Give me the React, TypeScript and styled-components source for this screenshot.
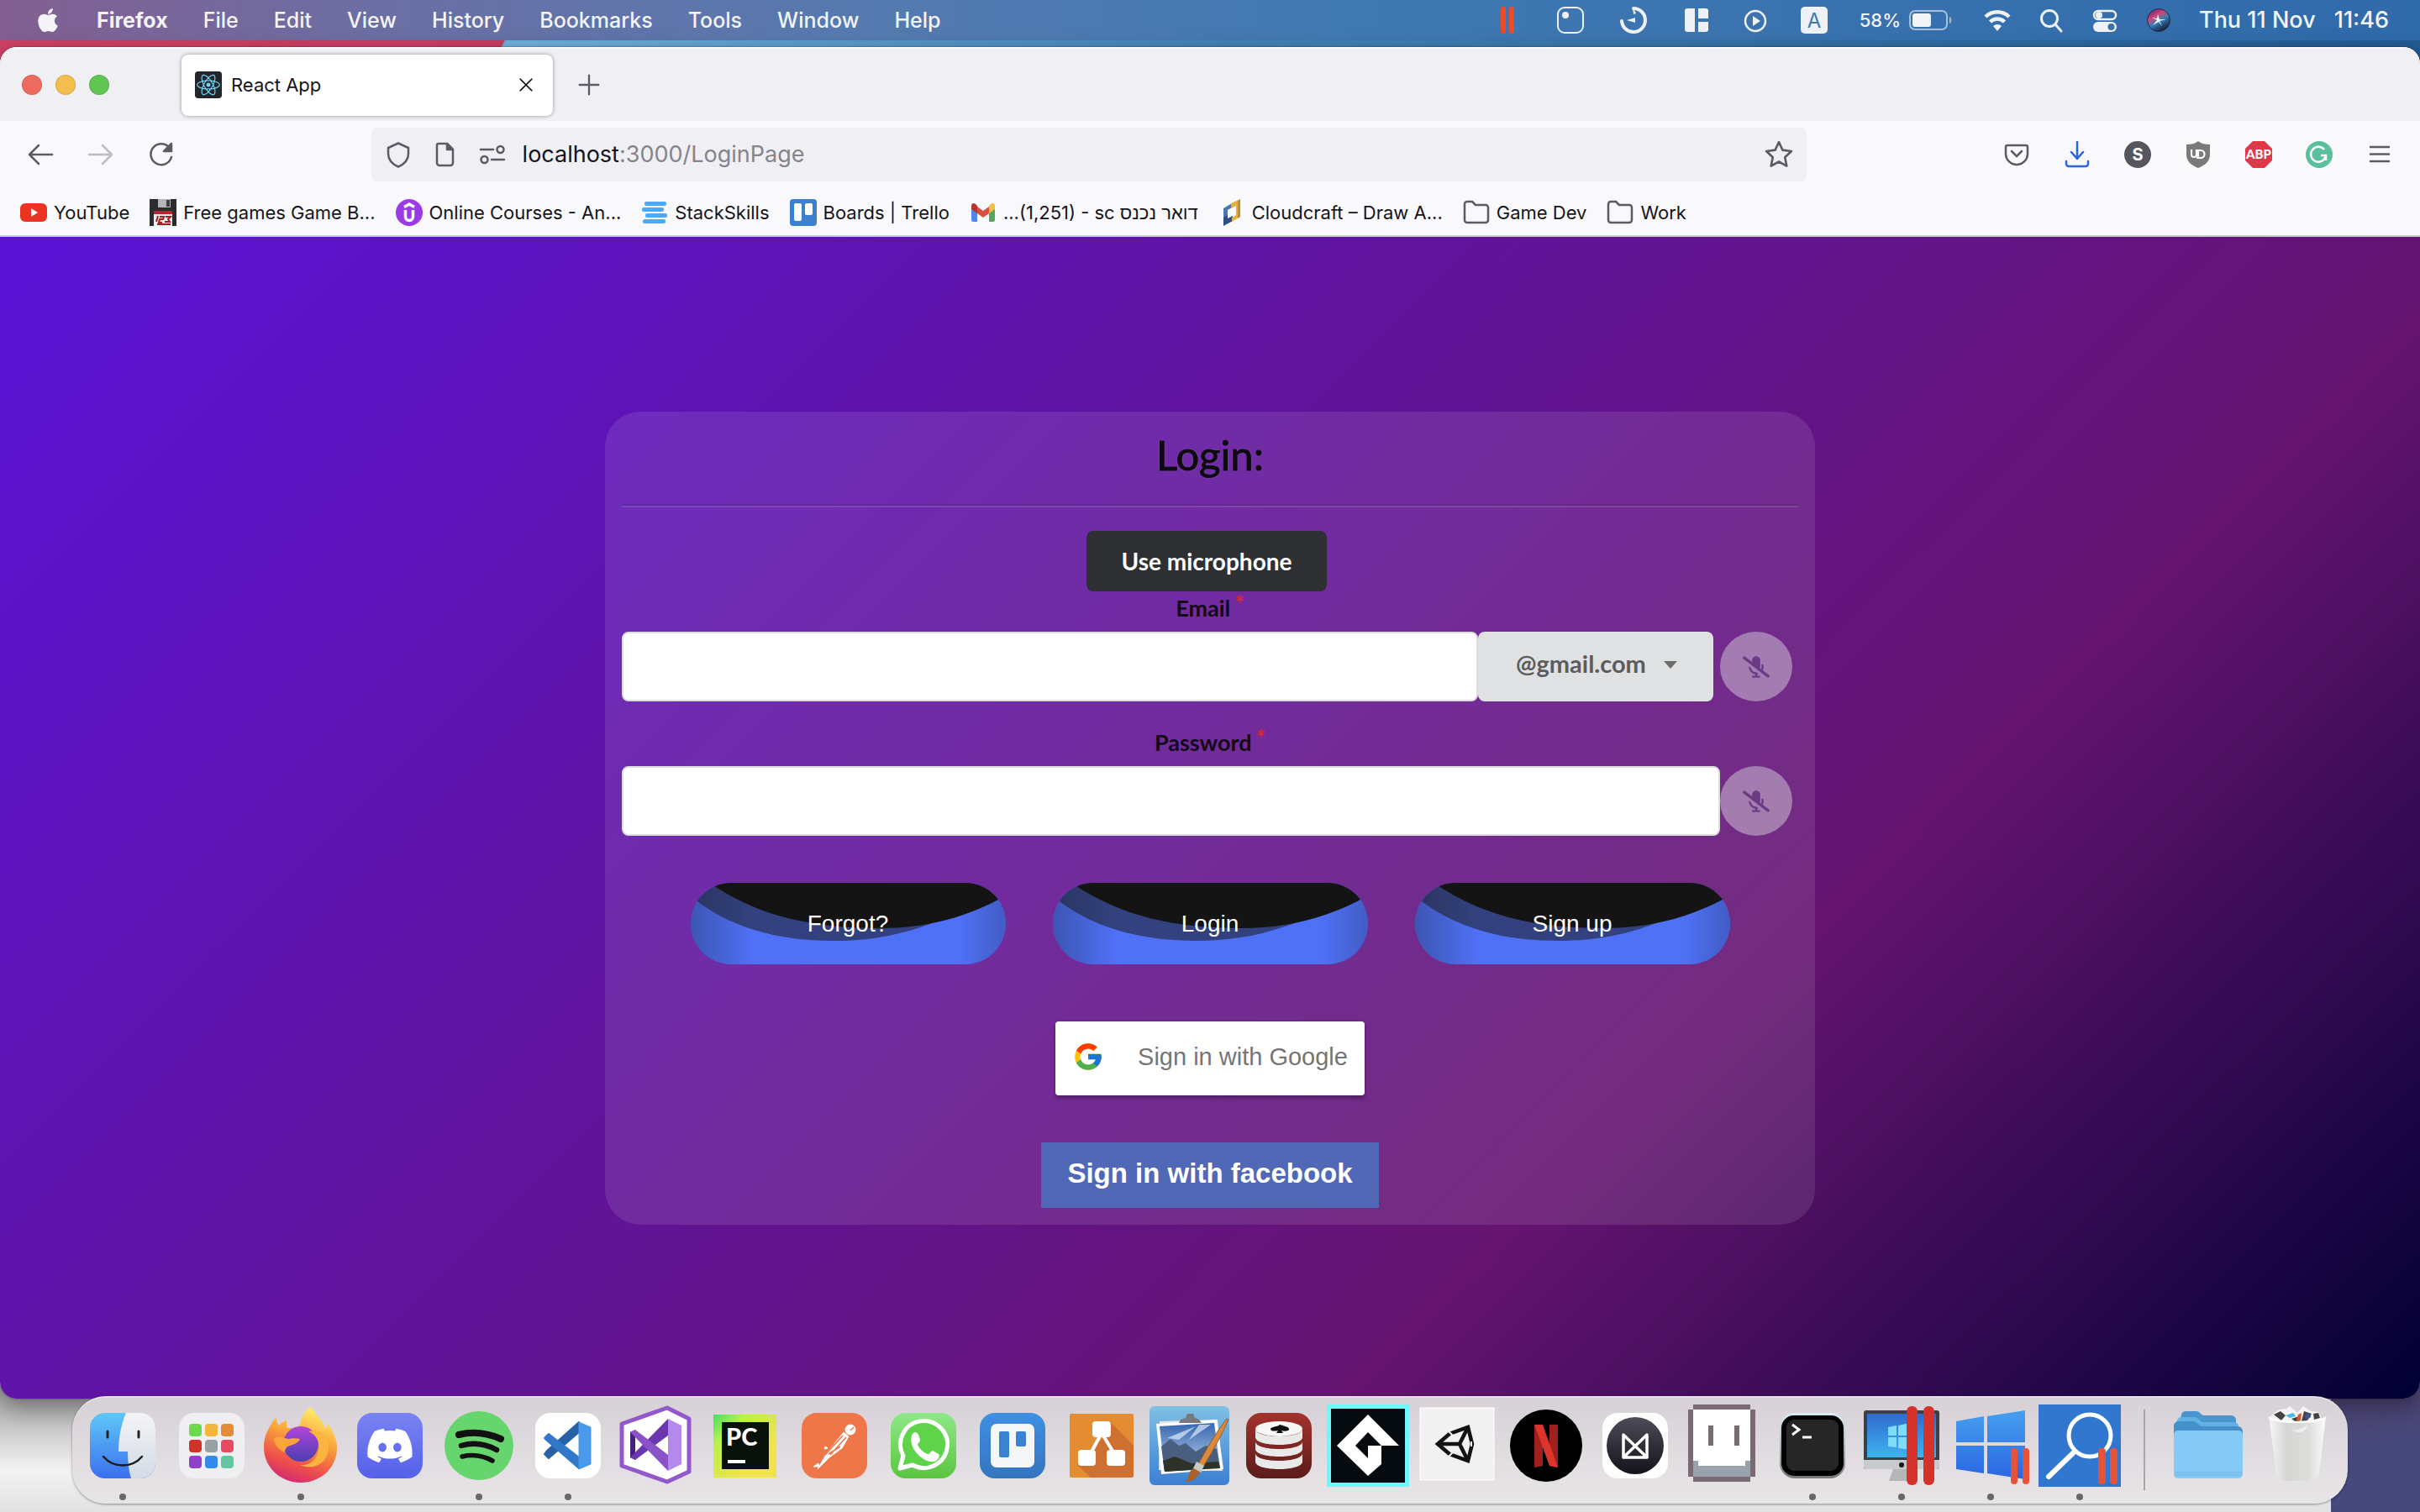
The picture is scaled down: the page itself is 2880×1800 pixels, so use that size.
import React from "react";
import styled, { createGlobalStyle } from "styled-components";
import { FaApple, FaDiscord, FaMicrophoneSlash, FaReact } from "react-icons/fa";
import { FcGoogle } from "react-icons/fc";

const GlobalStyle = createGlobalStyle`
  *, *::before, *::after { box-sizing: border-box; }
  html, body { margin: 0; padding: 0; }
  button, input, select { font: inherit; margin: 0; border: 0; padding: 0; background: none; color: inherit; }
  a { color: inherit; text-decoration: none; }
  svg { display: block; flex: none; }
`;

const uiFont = `Inter, "Liberation Sans", sans-serif`;
const pageFont = `Lato, "Liberation Sans", sans-serif`;
const plainFont = `"Liberation Sans", Arial, sans-serif`;

/* ---------- Desktop ---------- */

const Desktop = styled.div`
  position: relative;
  display: flex;
  flex-direction: column;
  min-height: 100vh;
  padding-bottom: 135px;
  overflow: hidden;
  font-family: ${uiFont};
  background:
    linear-gradient(116deg, #cf4263 0, #c83c63 560px, #6fb0da 562px, #4283b8 50%, #235a93 100%) top / 100% 90px no-repeat,
    linear-gradient(170deg, #5c2440 0%, #84375a 35%, #45497c 90%) bottom / 100% 260px no-repeat,
    #35568c;
`;

const BackWindow = styled.div`
  position: absolute;
  left: 0;
  right: 106px;
  bottom: 0;
  height: 180px;
  background: linear-gradient(to bottom, #8f8f8f 0, #a9a9a9 40px, #f2f2f2 130px, #e2e2e2 180px);
`;

const MenuBar = styled.header`
  display: flex;
  align-items: center;
  justify-content: space-between;
  height: 48px;
  padding: 0 37px 0 41px;
  color: #f3f3f8;
  font-size: 25px;
  line-height: 32px;
  background: linear-gradient(to right, #835f92 0, #6c6ea3 15%, #557ab0 36%, #4179b2 55%, #2f6aaa 100%);
`;

const MenuList = styled.nav`
  display: flex;
  align-items: center;
  gap: 42px;
  text-shadow: 0 2px 4px rgba(0, 0, 0, 0.3);
`;

const MenuItem = styled.button<{ $strong?: boolean }>`
  font-weight: ${(p) => (p.$strong ? 700 : 500)};
`;

const Status = styled.div<{ $gap: number }>`
  display: flex;
  align-items: center;
  gap: ${(p) => p.$gap}px;
`;

const Clock = styled.span`
  display: flex;
  justify-content: space-between;
  width: 226px;
  font-size: 27px;
  font-weight: 500;
  white-space: nowrap;
`;

const Percent = styled.span`
  font-size: 22px;
  font-weight: 500;
`;

/* ---------- Browser ---------- */

const BrowserWindow = styled.main`
  position: relative;
  display: flex;
  flex-direction: column;
  flex: 1;
  margin-top: 8px;
  border-radius: 20px;
  overflow: hidden;
  box-shadow: 0 0 2px rgba(0, 0, 0, 0.6), 0 12px 30px rgba(0, 0, 0, 0.35);
  background: #f9f9fb;
  color: #15141a;
`;

const TabStrip = styled.div`
  display: flex;
  align-items: center;
  height: 88px;
  padding: 0 26px;
  background: #f0eff4;
  border-top: 2px solid #fbfbfd;
`;

const Lights = styled.div`
  display: flex;
  gap: 16px;
  width: 190px;
`;

const Light = styled.button<{ $color: string }>`
  width: 24px;
  height: 24px;
  border-radius: 50%;
  background: ${(p) => p.$color};
  box-shadow: inset 0 0 0 1px rgba(0, 0, 0, 0.1);
`;

const Tab = styled.div`
  display: flex;
  align-items: center;
  width: 442px;
  height: 73px;
  padding: 0 24px 0 16px;
  border-radius: 8px;
  background: #fff;
  box-shadow: 0 0 4px rgba(0, 0, 0, 0.4);
  font-size: 22px;
  line-height: 32px;
`;

const TabTitle = styled.span`
  flex: 1;
  margin-left: 11px;
`;

const IconButton = styled.button<{ $size?: number }>`
  display: flex;
  align-items: center;
  justify-content: center;
  flex: none;
  width: ${(p) => p.$size ?? 72}px;
  height: ${(p) => p.$size ?? 72}px;
  color: #5b5b66;
`;

const NewTab = styled(IconButton)`
  margin-left: 7px;
`;

const Toolbar = styled.div`
  display: grid;
  grid-template-columns: 216px 1fr 8fr 1fr 504px;
  align-items: center;
  height: 80px;
  padding: 0 12px;
`;

const Cluster = styled.div<{ $column: number }>`
  grid-column: ${(p) => p.$column};
  display: flex;
`;

const UrlBar = styled.div`
  grid-column: 3;
  display: flex;
  align-items: center;
  height: 64px;
  padding: 0 16px;
  border-radius: 8px;
  background: #f0eff4;
  color: #5b5b66;
`;

const UrlIcons = styled.div`
  display: flex;
  gap: 24px;
  margin-right: 20px;
`;

const Address = styled.div`
  position: relative;
  flex: 1;
  font-size: 27px;
  line-height: 42px;
`;

const AddressInput = styled.input`
  width: 100%;
  color: transparent;
  caret-color: #15141a;
`;

const AddressText = styled.span`
  position: absolute;
  inset: 0;
  pointer-events: none;
  color: #85848a;
  b { font-weight: 400; color: #15141a; }
`;

const BookmarkBar = styled.nav`
  display: flex;
  align-items: center;
  gap: 24px;
  height: 58px;
  padding: 2px 24px 0;
  border-bottom: 2px solid #cccccf;
  font-size: 22px;
  line-height: 32px;
`;

const Bookmark = styled.a`
  display: flex;
  align-items: center;
  gap: 8px;
  white-space: nowrap;
`;

/* ---------- Login page ---------- */

const Page = styled.section`
  display: flex;
  flex: 1;
  align-items: flex-start;
  justify-content: center;
  padding-top: 208px;
  background: linear-gradient(135deg, #5a13d8 0%, #651470 70%, #000033 100%);
  font-family: ${pageFont};
`;

const Card = styled.form`
  display: flex;
  flex-direction: column;
  align-items: center;
  width: 50%;
  padding: 22px 20px 20px;
  border-radius: 42px;
  background: rgba(255, 255, 255, 0.1);
`;

const Title = styled.h1`
  margin: 0;
  font-size: 49px;
  font-weight: 400;
  line-height: 58px;
  color: #0e0a12;
  -webkit-text-stroke: 1px #0e0a12;
  text-shadow: 0 0 2px rgba(255, 255, 255, 0.35);
`;

const Divider = styled.hr`
  width: 100%;
  margin: 30px 0 28px;
  border: 0;
  border-top: 2px solid rgba(34, 36, 38, 0.15);
  border-bottom: 2px solid rgba(255, 255, 255, 0.12);
`;

const MicToggle = styled.button`
  height: 72px;
  margin-right: 8px;
  padding: 0 42px;
  border-radius: 8px;
  background: #2e3033;
  color: #fff;
  font-size: 28px;
  font-weight: 700;
`;

const FieldLabel = styled.label`
  margin: 4px 0 12px;
  font-size: 27px;
  font-weight: 700;
  line-height: 32px;
  color: #120a18;
`;

const Required = styled.span`
  margin-left: 5px;
  line-height: 20px;
  vertical-align: top;
  color: #db2828;
`;

const FieldRow = styled.div<{ $last?: boolean }>`
  display: flex;
  width: 100%;
  margin-bottom: ${(p) => (p.$last ? 56 : 29)}px;
  padding-right: 7px;
`;

const TextInput = styled.input`
  flex: 1;
  min-width: 0;
  height: 83px;
  padding: 0 28px;
  border: 2px solid #dedede;
  border-radius: 8px;
  background: #fff;
  font-size: 28px;
  color: #222;
`;

const DomainBox = styled.div`
  position: relative;
  width: 280px;
  margin-right: 8px;
`;

const DomainSelect = styled.select`
  appearance: none;
  width: 100%;
  height: 83px;
  padding: 0 0 9px 45px;
  border-radius: 8px;
  background: #e0e1e2;
  color: #5b5c5d;
  font-size: 29px;
  font-weight: 700;
`;

const Caret = styled.svg`
  position: absolute;
  top: 35px;
  right: 43px;
  pointer-events: none;
`;

const RoundMic = styled.button`
  display: flex;
  align-items: center;
  justify-content: center;
  width: 86px;
  height: 83px;
  border-radius: 50%;
  background: rgba(224, 225, 226, 0.45);
  color: #6b3a84;
`;

const Actions = styled.div`
  display: flex;
  gap: 56px;
`;

const WaveButton = styled.button`
  display: grid;
  width: 375px;
  height: 97px;
  border-radius: 48px;
  overflow: hidden;
  background: #4f71f6;
  color: #fff;
  font-family: ${plainFont};
  font-size: 28px;
  > * { grid-area: 1 / 1; }
`;

const WaveLabel = styled.span`
  position: relative;
  align-self: center;
`;

const GoogleButton = styled.button`
  display: flex;
  align-items: center;
  gap: 40px;
  height: 88px;
  margin-top: 68px;
  padding: 0 20px 4px;
  border-radius: 4px;
  background: #fff;
  color: #757575;
  box-shadow: 0 4px 4px rgba(0, 0, 0, 0.24), 0 0 2px rgba(0, 0, 0, 0.24);
  font-family: ${plainFont};
  font-size: 29px;
`;

const FacebookButton = styled.button`
  height: 78px;
  margin-top: 56px;
  padding: 0 31px 4px;
  background: #5068b5;
  color: #fff;
  font-family: ${plainFont};
  font-size: 33px;
  font-weight: 700;
`;

/* ---------- Dock ---------- */

const Dock = styled.nav`
  position: absolute;
  left: 3%;
  right: 3%;
  bottom: 10px;
  display: flex;
  align-items: flex-start;
  height: 128px;
  padding: 8px 7px 0;
  border-radius: 40px;
  border-top: 2px solid #e6e1e8;
  background: linear-gradient(to bottom, #d7d1d7, #e8e5e7);
  box-shadow: 0 1px 3px rgba(0, 0, 0, 0.4);
`;

const DockItem = styled.button`
  display: flex;
  flex: 1;
  flex-direction: column;
  align-items: center;
  gap: 8px;
`;

const RunningDot = styled.i`
  width: 8px;
  height: 8px;
  border-radius: 50%;
  background: #6a676a;
`;

const DockRule = styled.div`
  width: 2px;
  height: 96px;
  margin: 6px 22px 0 23px;
  background: #a9a6aa;
`;

/* ---------- Small icons ---------- */

type LineProps = { size?: number; width?: number; color?: string; children: React.ReactNode };

const Line = ({ size = 32, width = 2.5, color = "currentColor", children }: LineProps) => (
  <svg width={size} height={size} viewBox="0 0 32 32" fill="none" stroke={color} strokeWidth={width} strokeLinecap="round" strokeLinejoin="round">
    {children}
  </svg>
);

const Filled = ({ children }: { children: React.ReactNode }) => (
  <svg width="32" height="32" viewBox="0 0 32 32" fill="#eef1f6">
    {children}
  </svg>
);

const ParallelsBars = () => (
  <Filled>
    <rect x="8" y="0" width="6" height="32" rx="3" fill="#f04a26" />
    <rect x="18" y="0" width="6" height="32" rx="3" fill="#f04a26" />
  </Filled>
);

const BoxDot = () => (
  <Filled>
    <rect x="1" y="1" width="30" height="30" rx="8" fill="none" stroke="#eef1f6" strokeWidth="2" />
    <circle cx="10" cy="10" r="4" />
  </Filled>
);

const Swirl = () => (
  <Filled>
    <path d="M16 2a14 14 0 1 1-14 15" fill="none" stroke="#eef1f6" strokeWidth="4" strokeLinecap="round" />
    <path d="M15 0l4 8-3 1zM8 16l10-3v6z" />
  </Filled>
);

const Panels = () => (
  <Filled>
    <path d="M5 2h9v28H5a3 3 0 0 1-3-3V5a3 3 0 0 1 3-3zM18 2h9a3 3 0 0 1 3 3v9H18zM18 18h12v9a3 3 0 0 1-3 3h-9z" />
  </Filled>
);

const PlayRing = () => (
  <Filled>
    <circle cx="16" cy="17" r="12" fill="none" stroke="#eef1f6" strokeWidth="2.5" />
    <path d="M13 11l9 6-9 6z" />
  </Filled>
);

const InputSource = () => (
  <Filled>
    <rect width="32" height="32" rx="5" />
    <text x="16" y="25" textAnchor="middle" fontFamily="Inter" fontSize="24" fill="#3f77ad">A</text>
  </Filled>
);

const Battery = () => (
  <svg width="51" height="32" viewBox="0 0 51 32">
    <rect x="1" y="5" width="44" height="22" rx="6" fill="none" stroke="#a6c0db" strokeWidth="2" />
    <rect x="4" y="8" width="22" height="16" rx="3" fill="#f3f5f8" />
    <path d="M48 12c3 1 3 7 0 8z" fill="#a6c0db" />
  </svg>
);

const Wifi = () => (
  <Filled>
    <g fill="none" stroke="#eef1f6" strokeWidth="4.5">
      <path d="M2 12a20 20 0 0 1 28 0" />
      <path d="M7.500 18a12 12 0 0 1 17 0" />
    </g>
    <path d="M11 23a7 7 0 0 1 10 0l-5 6z" />
  </Filled>
);

const Search = () => (
  <Line width={3} color="#eef1f6">
    <circle cx="14" cy="14" r="9.500" />
    <path d="M21 21l7 8" />
  </Line>
);

const ControlCenter = () => (
  <Filled>
    <rect x="3" y="5" width="26" height="10" rx="5" fill="none" stroke="#eef1f6" strokeWidth="2.500" />
    <circle cx="9" cy="10" r="4" />
    <rect x="2" y="18" width="28" height="12" rx="6" />
    <circle cx="23.500" cy="24" r="4" fill="#3a72a9" />
  </Filled>
);

const Siri = () => (
  <Filled>
    <defs>
      <linearGradient id="siri" x1="0" y1="0" x2="0.600" y2="1">
        <stop offset="0" stopColor="#3a1e5c" />
        <stop offset="0.400" stopColor="#d2457e" />
        <stop offset="0.650" stopColor="#2f7fb4" />
        <stop offset="1" stopColor="#1c1c38" />
      </linearGradient>
    </defs>
    <circle cx="16" cy="16" r="13.500" fill="url(#siri)" stroke="#1d2c50" />
    <path d="M15 9l2 6 8 0-8 2 3 6-4-5-7 4 5-6-6-3 6 1z" fill="#dff8fb" />
  </Filled>
);

const Shield = () => (
  <Line>
    <path d="M16 2.500l12 5.500v7c0 7-5 12.500-12 15.500C9 27.500 4 22 4 15V8z" />
  </Line>
);

const Doc = () => (
  <Line>
    <path d="M8 3h10l7 7v16a3 3 0 0 1-3 3H9a3 3 0 0 1-3-3V5a2 2 0 0 1 2-2z" />
    <path d="M18 3v7h7z" fill="currentColor" />
  </Line>
);

const Permissions = () => (
  <Line>
    <path d="M2 10h15M15 22h15" />
    <circle cx="25.500" cy="10" r="4" />
    <circle cx="6.500" cy="22" r="4" />
  </Line>
);

const Star = () => (
  <Line size={34}>
    <path d="M16 2l4.200 9 9.800 1.200-7.200 6.800 1.900 9.800L16 24l-8.700 4.800 1.900-9.800L2 12.200 11.800 11z" />
  </Line>
);

const Floppy = () => (
  <svg width="32" height="32" viewBox="0 0 32 32">
    <path d="M0 0h32v32H0z" fill="#2c2b2d" />
    <path d="M10 0h15v10H10z" fill="#b4b4b6" />
    <path d="M20 1h4v8h-4z" fill="#3e3e40" />
    <path d="M5 14h22v18H5z" fill="#f0eeee" />
    <path d="M5 14h22v4H5z" fill="#b3282a" />
    <path d="M8 27l2-7M12 21h5l-1 3h-4l-1 4h4M19 21h6l-3 3 2 3h-6M9 30h16" fill="none" stroke="#a3201f" strokeWidth="2" />
  </svg>
);

const folderLine = <path d="M2 8V6a3 3 0 0 1 3-3h6l4 4h12a3 3 0 0 1 3 3v15a3 3 0 0 1-3 3H5a3 3 0 0 1-3-3z" />;

const bookmarks: { label: string; icon: React.ReactNode }[] = [
  {
    label: "YouTube",
    icon: (
      <svg width="32" height="32" viewBox="0 0 32 32">
        <rect y="5" width="32" height="22" rx="6" fill="#ea3323" />
        <path d="M13 11l8 5-8 5z" fill="#fff" />
      </svg>
    ),
  },
  { label: "Free games Game B...", icon: <Floppy /> },
  {
    label: "Online Courses - An...",
    icon: (
      <svg width="32" height="32" viewBox="0 0 32 32" fill="none" stroke="#fff" strokeWidth="3.500">
        <circle cx="16" cy="16" r="16" fill="#9b3be6" stroke="none" />
        <path d="M10 9.500L16 6l6 3.500M11.500 13v8a4.500 4.500 0 0 0 9 0v-8" />
      </svg>
    ),
  },
  {
    label: "StackSkills",
    icon: (
      <svg width="32" height="32" viewBox="0 0 32 32" fill="#4aaaf7">
        <rect x="4" y="3" width="26" height="5" rx="2" />
        <rect x="1" y="10" width="26" height="5" rx="2" />
        <rect x="5" y="17" width="26" height="5" rx="2" />
        <rect x="2" y="24" width="27" height="5" rx="2" />
      </svg>
    ),
  },
  {
    label: "Boards | Trello",
    icon: (
      <svg width="32" height="32" viewBox="0 0 32 32">
        <rect width="32" height="32" rx="4" fill="#3a80cf" />
        <rect x="5" y="5" width="9" height="21" rx="2" fill="#fff" />
        <rect x="18" y="5" width="9" height="14" rx="2" fill="#fff" />
      </svg>
    ),
  },
  {
    label: "...(1,251) - sc דואר נכנס",
    icon: (
      <svg width="32" height="32" viewBox="0 0 32 32">
        <path d="M2 9l7 6v12H4a2 2 0 0 1-2-2z" fill="#5086ec" />
        <path d="M30 9l-7 6v12h5a2 2 0 0 0 2-2z" fill="#58a65c" />
        <path d="M9 9l7 5 7-5v8l-7 5-7-5z" fill="#d85140" />
        <path d="M2 12V8c0-3 3-4 5-2l2 2v9z" fill="#b5372c" />
        <path d="M30 12V8c0-3-3-4-5-2l-2 2v9z" fill="#f1bf42" />
      </svg>
    ),
  },
  {
    label: "Cloudcraft – Draw A...",
    icon: (
      <svg width="32" height="32" viewBox="0 0 32 32">
        <path d="M6 11l10-6v5l-5 3v10l-5 4z" fill="#4a78ae" />
        <path d="M6 22l5-3v4l6-3v6L6 32z" fill="#2d4f80" />
        <path d="M15 5l11-5v21l-10 6v-5l5-3V8l-6 3z" fill="#e5b142" />
        <path d="M23 2l3-2v21l-3 2z" fill="#c08f2d" />
      </svg>
    ),
  },
  { label: "Game Dev", icon: <Line color="#5b5b66">{folderLine}</Line> },
  { label: "Work", icon: <Line color="#5b5b66">{folderLine}</Line> },
];

/* ---------- Dock icons, drawn on a 98 × 98 grid ---------- */

const Tile = ({ fill }: { fill: string }) => <rect x="10" y="10" width="78" height="78" rx="18" fill={fill} />;

const Fade = ({ id, from, to }: { id: string; from: string; to: string }) => (
  <linearGradient id={id} x1="0" y1="0" x2="0" y2="1">
    <stop offset="0" stopColor={from} />
    <stop offset="1" stopColor={to} />
  </linearGradient>
);

const launchColors = ["#6cd94c", "#f3b73c", "#e58a35", "#cf3326", "#97a0a2", "#e84a61", "#8f42c8", "#3489ec", "#62c6a0"];

const dockIcons: { name: string; running?: boolean; art: React.ReactNode }[] = [
  {
    name: "Finder",
    running: true,
    art: (
      <>
        <defs>
          <Fade id="finder" from="#5fc8f8" to="#3b6fee" />
          <Fade id="finderFace" from="#f4f4f6" to="#d3dbe6" />
          <clipPath id="finderClip"><rect x="10" y="10" width="78" height="78" rx="18" /></clipPath>
        </defs>
        <Tile fill="url(#finder)" />
        <path d="M53 10c-6 14-9 30-9 46h11c0 12 1 22 4 32h30V10z" fill="url(#finderFace)" clipPath="url(#finderClip)" />
        <path d="M31 32v7M68 32v7" stroke="#222" strokeWidth="3" strokeLinecap="round" />
        <path d="M26 62c12 14 34 14 46 0" fill="none" stroke="#1c1c1c" strokeWidth="2.500" strokeLinecap="round" />
      </>
    ),
  },
  {
    name: "Launchpad",
    art: (
      <>
        <Tile fill="#efeff1" />
        {launchColors.map((color, i) => (
          <rect key={color} x={22 + (i % 3) * 19} y={23 + Math.floor(i / 3) * 19} width="15" height="15" rx="4" fill={color} />
        ))}
      </>
    ),
  },
  {
    name: "Firefox",
    running: true,
    art: (
      <>
        <defs>
          <linearGradient id="fox" x1="0.700" y1="0" x2="0.350" y2="1">
            <stop offset="0" stopColor="#fff36a" />
            <stop offset="0.400" stopColor="#f9a53a" />
            <stop offset="0.750" stopColor="#ee5148" />
            <stop offset="1" stopColor="#d42a74" />
          </linearGradient>
          <Fade id="globe" from="#b344dc" to="#4a3fb0" />
        </defs>
        <path d="M61 3c5 9 13 14 17 26 2-2 2-4 2-7 8 9 12 20 12 30 0 23-19 41-43 41S5 75 5 51c0-12 4-20 9-28 1-3 3-5 6-7 0 4 1 7 3 9 2-3 6-5 9-6v8c3 1 5 2 8 1 5-1 9-3 9-8 2-8 6-13 12-17z" fill="url(#fox)" />
        <circle cx="49" cy="47" r="21" fill="url(#globe)" />
        <path d="M17 40c8-3 13 0 17 1 5-1 9-1 14 0-2 5-8 7-12 8-4 1-6 4-6 8-7-3-13-9-13-17z" fill="#f8a63c" />
        <path d="M58 32c12 5 16 18 10 29-4 8-12 12-20 11 20 8 36-6 34-24-1-13-10-18-24-16z" fill="#fbb53f" />
      </>
    ),
  },
  {
    name: "Discord",
    art: (
      <>
        <defs><Fade id="discord" from="#7a83f1" to="#5460ea" /></defs>
        <Tile fill="url(#discord)" />
        <FaDiscord x={20} y={20} size={58} color="#fff" />
      </>
    ),
  },
  {
    name: "Spotify",
    running: true,
    art: (
      <>
        <circle cx="49" cy="49" r="41" fill="#66d56e" />
        <g fill="none" stroke="#111" strokeLinecap="round">
          <path d="M25 36c16-4 34-2 50 5" strokeWidth="8" />
          <path d="M28 49c14-4 29-2 42 5" strokeWidth="6.500" />
          <path d="M29 62c13-3 25-1 36 5" strokeWidth="5.500" />
        </g>
      </>
    ),
  },
  {
    name: "Visual Studio Code",
    running: true,
    art: (
      <>
        <Tile fill="#fff" />
        <path d="M21 59l5 5 36-31V21L24 55z" fill="#2862a6" stroke="#2862a6" strokeWidth="2" strokeLinejoin="round" />
        <path d="M21 40l5-5 36 28v13L24 43z" fill="#3278c8" stroke="#3278c8" strokeWidth="2" strokeLinejoin="round" />
        <path d="M62 21l14 6v44l-14 6z" fill="#4a9aec" stroke="#4a9aec" strokeLinejoin="round" />
      </>
    ),
  },
  {
    name: "Visual Studio",
    art: (
      <>
        <path d="M62 4l26 13v63L62 92 8 73V23z" fill="#fff" stroke="#9359cc" strokeWidth="5" strokeLinejoin="round" />
        <path d="M18 33l6-3v36l-6-3z" fill="#472080" />
        <path d="M24 66l39-29V17L18 63z" fill="#6a37b0" />
        <path d="M24 30l39 30v19L18 33z" fill="#8a52c8" />
        <path d="M63 17l16 8v46l-16 8z" fill="#b38aec" />
      </>
    ),
  },
  {
    name: "PyCharm",
    art: (
      <>
        <defs>
          <linearGradient id="pycharm" x1="0" y1="0" x2="0.700" y2="0.700">
            <stop offset="0" stopColor="#3fe35d" />
            <stop offset="0.350" stopColor="#b6f04e" />
            <stop offset="1" stopColor="#f2e34c" />
          </linearGradient>
        </defs>
        <rect x="11" y="12" width="75" height="75" fill="url(#pycharm)" />
        <rect x="21" y="21" width="56" height="56" fill="#08110a" />
        <text x="26" y="49" fontFamily="Lato" fontWeight="900" fontSize="29" fill="#fff">PC</text>
        <rect x="28" y="66" width="21" height="4" fill="#fff" />
      </>
    ),
  },
  {
    name: "Postman",
    art: (
      <>
        <Tile fill="#ee7649" />
        <g fill="#fff" stroke="#fff" strokeLinejoin="round">
          <circle cx="68" cy="30" r="6" />
          <path d="M60 33l6 5-8 14-15 11-14 14 11-19z" />
          <path d="M38 50l-1 3 4-1zM24 74l6-4 1 4z" />
        </g>
        <path d="M59 37L38 60M63 39L44 60M68 31l4-4M42 59l14-9" stroke="#ee7649" strokeWidth="1.500" />
      </>
    ),
  },
  {
    name: "WhatsApp",
    art: (
      <>
        <defs><Fade id="whatsapp" from="#8ee887" to="#5ac540" /></defs>
        <Tile fill="url(#whatsapp)" />
        <path d="M21 76l4-15a28 28 0 1 1 11 11z" fill="#5fd34a" stroke="#fff" strokeWidth="5" strokeLinejoin="round" />
        <path d="M35 37c2-5 6-5 8-1l2 6c0 3-3 4-3 6 3 6 7 9 12 11 3 0 4-4 6-4l7 4c2 2 0 6-3 8-5 3-13 0-19-5-7-6-13-15-10-25z" fill="#fff" />
      </>
    ),
  },
  {
    name: "Trello",
    art: (
      <>
        <defs><Fade id="trello" from="#3f8fe4" to="#3475bf" /></defs>
        <Tile fill="url(#trello)" />
        <rect x="23" y="23" width="52" height="52" rx="7" fill="#f5f6f8" />
        <rect x="33" y="32" width="12" height="31" rx="2" fill="#3a82d2" />
        <rect x="53" y="32" width="12" height="18" rx="2" fill="#3a82d2" />
      </>
    ),
  },
  {
    name: "draw.io",
    art: (
      <>
        <rect x="11" y="11" width="76" height="76" rx="2" fill="#e38c31" />
        <path d="M59 20l28 29v36l-2 2H36L20 72l31-33z" fill="#d07030" />
        <path d="M49 34L35 60M49 34l16 26" stroke="#fff" strokeWidth="4" />
        <g fill="#fff">
          <rect x="38" y="20" width="22" height="19" rx="4" />
          <rect x="21" y="54" width="21" height="19" rx="4" />
          <rect x="55" y="54" width="22" height="19" rx="4" />
        </g>
      </>
    ),
  },
  {
    name: "Paintbrush",
    art: (
      <>
        <defs>
          <Fade id="paint" from="#7fc0e4" to="#3d7fd2" />
          <Fade id="sky" from="#3566b0" to="#c4d8ee" />
        </defs>
        <rect x="1" y="2" width="95" height="94" rx="6" fill="url(#paint)" />
        <path d="M13 20l69-2 6 61-76-1z" fill="#e8e4df" />
        <path d="M9 23l72-5 8 59-74 6z" fill="#fbfbfb" />
        <path d="M13 26l65-4 7 53-66 5z" fill="url(#sky)" />
        <path d="M22 40l34-14-20 16zM60 24l14 0-26 18z" fill="#dbe8f6" opacity="0.700" />
        <path d="M15 50l11-9 10 8 8-3 12 10 12-7 13 4 4 22-66 5z" fill="#4a5f80" />
        <path d="M17 67l14-5 20 8 32-2 2 8-66 4z" fill="#2e3329" />
        <path d="M38 18l-2 4h27l-3-4-5-2-2-5h-7l-2 5z" fill="#77797c" />
        <path d="M93 17c-12 15-24 36-34 54l6 3c11-18 22-38 30-56z" fill="#d98a3d" stroke="#9a5c20" />
        <path d="M57 68l9 5-4 8-9-5z" fill="#c9c9c9" />
        <path d="M53 76l8 4c-3 8-9 12-17 12 4-5 3-12 9-16z" fill="#a9602a" />
      </>
    ),
  },
  {
    name: "Sequel Ace",
    art: (
      <>
        <defs><Fade id="sequel" from="#a4322c" to="#5a1c1a" /></defs>
        <Tile fill="url(#sequel)" />
        <g fill="#e9e9e9">
          <path d="M21 58c0 12 56 12 56 0v10c0 12-56 12-56 0z" />
          <path d="M21 44c0 12 56 12 56 0v9c0 12-56 12-56 0z" />
          <path d="M21 29c0 12 56 12 56 0v10c0 12-56 12-56 0z" />
        </g>
        <ellipse cx="49" cy="29" rx="28" ry="9" fill="#f7f7f7" />
        <path d="M50 24c6 2 12 3 11 6-1 2-6 2-9 1l2 3h-8l2-3c-4 1-9 1-9-2 1-3 8-2 11-5z" fill="#111" />
      </>
    ),
  },
  {
    name: "GameMaker",
    art: (
      <>
        <rect width="98" height="98" fill="#6ff7fb" />
        <rect x="5" y="5" width="88" height="88" fill="#060b10" />
        <path d="M49 12l37 37H65v22L49 85 12 49zM49 33L34 49l15 15V49h16z" fill="#fff" fillRule="evenodd" />
      </>
    ),
  },
  {
    name: "Unity",
    art: (
      <>
        <rect x="5" y="4" width="88" height="86" fill="#f1f1f1" stroke="#fff" />
        <path d="M26 47l14-12 22-8 5 20-5 20-22-8zM26 47h26M52 47l10-20M52 47l10 20" fill="none" stroke="#121212" strokeWidth="4.500" />
        <path d="M38 31l6 6M38 63l6-6M66 44v6" stroke="#f1f1f1" strokeWidth="2" />
      </>
    ),
  },
  {
    name: "Netflix",
    art: (
      <>
        <circle cx="49" cy="49" r="43" fill="#000" />
        <path d="M35 24h10v49l-10 2zM53 24h10v51l-10-2z" fill="#9f201c" />
        <path d="M35 24h10l18 51-10-2z" fill="#dc352d" />
      </>
    ),
  },
  {
    name: "Xmind",
    art: (
      <>
        <defs><Fade id="mind" from="#4c4b58" to="#14131a" /></defs>
        <Tile fill="#fdfdfd" />
        <circle cx="49" cy="49" r="34" fill="url(#mind)" />
        <path d="M35 63V36l28 27V36L35 63zM35 63h28" fill="none" stroke="#fff" strokeWidth="3.500" strokeLinejoin="round" />
      </>
    ),
  },
  {
    name: "Aseprite",
    art: (
      <>
        <path d="M12 0h68v6h6v80h-6v6H12v-6H6V6h6z" fill="#7a6a73" />
        <path d="M12 6h68v70H12z" fill="#fff" />
        <path d="M12 67h6v6h56v-6h6v19H12z" fill="#98a3ae" />
        <path d="M30 25h6v24h-6zM61 25h6v24h-6z" fill="#7a6a73" />
      </>
    ),
  },
  {
    name: "Terminal",
    running: true,
    art: (
      <>
        <defs><Fade id="terminal" from="#d9ecf6" to="#77797b" /></defs>
        <Tile fill="url(#terminal)" />
        <rect x="12" y="13" width="74" height="72" rx="15" fill="#000" />
        <rect x="18" y="18" width="62" height="61" rx="9" fill="#262626" />
        <path d="M25 24l8 6-8 6M37 39h11" fill="none" stroke="#fff" strokeWidth="3" />
      </>
    ),
  },
  {
    name: "Parallels Desktop",
    running: true,
    art: (
      <>
        <defs><Fade id="screen" from="#2f6ad0" to="#3fb4ee" /></defs>
        <rect x="4" y="7" width="90" height="70" rx="3" fill="#3d3f43" />
        <rect x="8" y="11" width="82" height="52" fill="url(#screen)" />
        <path d="M4 66h90v8a3 3 0 0 1-3 3H7a3 3 0 0 1-3-3z" fill="#c9cacc" />
        <circle cx="49" cy="72" r="3" fill="#111" />
        <path d="M39 77h21l4 14H34z" fill="#b5b6b8" />
        <path d="M33 27l10-2v12H33zM45 25l14-3v15H45zM33 39h10v12l-10-1zM45 39h14v15l-14-2z" fill="#7fdcf8" />
        <rect x="55" y="2" width="13" height="94" rx="6" fill="#d5322b" />
        <rect x="75" y="2" width="13" height="94" rx="6" fill="#d5322b" />
      </>
    ),
  },
  {
    name: "Windows",
    running: true,
    art: (
      <>
        <defs><Fade id="panes" from="#469fee" to="#2b66e4" /></defs>
        <path d="M8 20l33-6v31H8zM45 14l45-7v38H45zM8 49h33v33L8 77zM45 49h45v40l-45-7z" fill="url(#panes)" />
        <rect x="73" y="52" width="8" height="43" rx="4" fill="#e5533b" />
        <rect x="87" y="52" width="8" height="43" rx="4" fill="#e5533b" />
      </>
    ),
  },
  {
    name: "Search",
    running: true,
    art: (
      <>
        <rect width="98" height="98" fill="#3277cf" />
        <circle cx="61" cy="37" r="25" fill="none" stroke="#fff" strokeWidth="5" />
        <path d="M43 56L12 86" stroke="#fff" strokeWidth="6" strokeLinecap="round" />
        <rect x="71" y="52" width="9" height="43" rx="4" fill="#e5533b" />
        <rect x="85" y="52" width="9" height="43" rx="4" fill="#e5533b" />
      </>
    ),
  },
];

const tray: { name: string; art: React.ReactNode }[] = [
  {
    name: "Downloads",
    art: (
      <>
        <path d="M17 12c1-3 3-4 5-4h13c4 0 5 5 9 5h32c4 0 6 3 6 6v10H14z" fill="#4a95cd" />
        <path d="M12 19c1-3 3-4 5-4h16c5 0 5 6 10 6h36c3 0 6 2 6 5v12H8V24z" fill="#62b1e4" />
        <path d="M8 27c0-5 3-7 7-7h15c6 0 7 6 12 6h42c4 0 6 3 6 7v12H8z" fill="#4490ca" />
        <rect x="8" y="31" width="82" height="57" rx="5" fill="#86cbf6" />
        <path d="M9 81h80M9 84h80" stroke="#6db4e4" />
      </>
    ),
  },
  {
    name: "Trash",
    art: (
      <>
        <defs>
          <linearGradient id="bin" x1="0" x2="1">
            <stop offset="0" stopColor="#f7f7f7" />
            <stop offset="0.300" stopColor="#d6d6d5" />
            <stop offset="0.700" stopColor="#dddddc" />
            <stop offset="1" stopColor="#fafafa" />
          </linearGradient>
        </defs>
        <path d="M17 14l10-8 9-1 4-3 9 8 7-8 9 6 9 1 5 11-31 6-30-7z" fill="#f4f4f4" />
        <path d="M21 12l8-4 6 5-5 6zM42 17l9-3-2 8zM57 8l9 3-5 8-7 1zM68 11l6-1 2 6-7 2z" fill="#46423f" />
        <path d="M35 13l9-3 3 4-7 2z" fill="#45b8e6" />
        <path d="M50 12l4-2-1 9-6 3z" fill="#d9582e" />
        <path d="M58 12l6-2 1 5-6 4z" fill="#42518f" />
        <path d="M15 14c8 9 60 9 68 0l-8 68c-1 5-6 8-12 9H36c-6-1-11-4-12-9z" fill="url(#bin)" />
        <path d="M15 15c8 8 60 8 68 0" fill="none" stroke="#fff" strokeWidth="2" />
        <path d="M41 30c8 2 16-2 20-6-1 8-8 12-20 6z" fill="#efefef" />
      </>
    ),
  },
];

const Glyph = ({ children }: { children: React.ReactNode }) => (
  <svg width="98" height="98" viewBox="0 0 98 98">
    {children}
  </svg>
);

const menus = ["Firefox", "File", "Edit", "View", "History", "Bookmarks", "Tools", "Window", "Help"];

const Wave = () => (
  <svg width="375" height="97" viewBox="0 0 375 97" aria-hidden="true">
    <defs>
      <linearGradient id="edge">
        <stop offset="0" stopColor="#141414" stopOpacity="0.300" />
        <stop offset="0.200" stopColor="#141414" stopOpacity="0" />
        <stop offset="0.850" stopColor="#141414" stopOpacity="0" />
        <stop offset="1" stopColor="#141414" stopOpacity="0.220" />
      </linearGradient>
    </defs>
    <path d="M0 16c44 36 100 53 170 53 48 0 86-8 130-26L375 0H0z" fill="#33427f" />
    <path d="M14 -6c62 46 130 60 211 60 55 0 105-13 150-39V-6z" fill="#141414" />
    <path d="M0 0h26c62 40 124 54 199 54 55 0 105-13 150-39v82H0z" fill="url(#edge)" />
  </svg>
);

const ToolbarIcons = () => (
  <Cluster $column={5}>
    <IconButton type="button" aria-label="Pocket">
      <Line><path d="M5 5h22a2 2 0 0 1 2 2v8a13 13 0 0 1-26 0V7a2 2 0 0 1 2-2zM10 12l6 6 6-6" /></Line>
    </IconButton>
    <IconButton type="button" aria-label="Downloads">
      <Line color="#2a63dc"><path d="M16 1v19M9 13l7 8 7-8M3 24v3a3 3 0 0 0 3 3h20a3 3 0 0 0 3-3v-3" /></Line>
    </IconButton>
    <IconButton type="button" aria-label="Stylus">
      <svg width="32" height="32" viewBox="0 0 32 32">
        <circle cx="16" cy="16" r="16" fill="#56565f" />
        <text x="16" y="23" textAnchor="middle" fontFamily="Inter" fontWeight="700" fontSize="20" fill="#fff">S</text>
      </svg>
    </IconButton>
    <IconButton type="button" aria-label="uBlock">
      <svg width="32" height="32" viewBox="0 0 32 32">
        <path d="M16 0c4 3 8 4 14 4v12c0 8-6 13-14 16C8 29 2 24 2 16V4c6 0 10-1 14-4z" fill="#7a7a7a" />
        <path d="M8 10v6a3 3 0 0 0 6 0v-6M16 20v-9h3a4.500 4.500 0 0 1 0 9h-5" fill="none" stroke="#fff" strokeWidth="2.200" />
      </svg>
    </IconButton>
    <IconButton type="button" aria-label="Adblock Plus">
      <svg width="32" height="32" viewBox="0 0 32 32">
        <path d="M9 0h14l9 9v14l-9 9H9l-9-9V9z" fill="#dc3a48" />
        <text x="16" y="21" textAnchor="middle" fontFamily="Lato" fontWeight="900" fontSize="15" fill="#fff">ABP</text>
      </svg>
    </IconButton>
    <IconButton type="button" aria-label="Grammarly">
      <svg width="32" height="32" viewBox="0 0 32 32">
        <circle cx="16" cy="16" r="16" fill="#5ac09c" />
        <path d="M22 10a9 9 0 1 0 2 7h-6M24 17v6" fill="none" stroke="#fff" strokeWidth="2.500" />
      </svg>
    </IconButton>
    <IconButton type="button" aria-label="Menu">
      <Line><path d="M5 7h22M5 15.500h22M5 24h22" /></Line>
    </IconButton>
  </Cluster>
);

export default function App() {
  return (
    <Desktop>
      <GlobalStyle />
      <BackWindow />
      <MenuBar>
        <MenuList>
          <FaApple size={32} />
          {menus.map((name, i) => (
            <MenuItem key={name} type="button" $strong={i === 0}>{name}</MenuItem>
          ))}
        </MenuList>
        <Status $gap={38}>
          <Status $gap={43}>
            <ParallelsBars />
            <BoxDot />
            <Swirl />
            <Panels />
          </Status>
          <PlayRing />
          <InputSource />
          <Status $gap={10}>
            <Percent>58%</Percent>
            <Battery />
          </Status>
          <Status $gap={32}>
            <Wifi />
            <Search />
            <ControlCenter />
            <Siri />
            <Clock>
              <span>Thu 11 Nov</span>
              <span>11:46</span>
            </Clock>
          </Status>
        </Status>
      </MenuBar>

      <BrowserWindow>
        <TabStrip>
          <Lights>
            <Light type="button" aria-label="Close" $color="#ed6a5e" />
            <Light type="button" aria-label="Minimise" $color="#f4be4f" />
            <Light type="button" aria-label="Zoom" $color="#61c554" />
          </Lights>
          <Tab>
            <svg width="32" height="32" viewBox="0 0 32 32">
              <rect width="32" height="32" rx="4" fill="#222529" />
              <FaReact x={2} y={2} size={28} color="#6fd6f5" />
            </svg>
            <TabTitle>React App</TabTitle>
            <IconButton type="button" aria-label="Close tab" $size={16}>
              <Line size={20} color="#15141a"><path d="M5 5l22 22M27 5L5 27" /></Line>
            </IconButton>
          </Tab>
          <NewTab type="button" aria-label="New tab">
            <Line size={30}><path d="M16 4v24M4 16h24" /></Line>
          </NewTab>
        </TabStrip>

        <Toolbar>
          <Cluster $column={1}>
            <IconButton type="button" aria-label="Back">
              <Line><path d="M30 16H3M14 5L3 16l11 11" /></Line>
            </IconButton>
            <IconButton type="button" aria-label="Forward" disabled>
              <Line color="#bcbcc2"><path d="M2 16h27M18 5l11 11-11 11" /></Line>
            </IconButton>
            <IconButton type="button" aria-label="Reload">
              <Line>
                <path d="M28 19a12.500 12.500 0 1 1-3-12" />
                <path d="M28 3v9h-9z" fill="currentColor" />
              </Line>
            </IconButton>
          </Cluster>
          <UrlBar>
            <UrlIcons>
              <Shield />
              <Doc />
              <Permissions />
            </UrlIcons>
            <Address>
              <AddressInput aria-label="Address" />
              <AddressText><b>localhost</b>:3000/LoginPage</AddressText>
            </Address>
            <Star />
          </UrlBar>
          <ToolbarIcons />
        </Toolbar>

        <BookmarkBar>
          {bookmarks.map(({ label, icon }) => (
            <Bookmark key={label} href="#">
              {icon}
              {label}
            </Bookmark>
          ))}
        </BookmarkBar>

        <Page>
          <Card onSubmit={(e) => e.preventDefault()}>
            <Title>Login:</Title>
            <Divider />
            <MicToggle type="button">Use microphone</MicToggle>
            <FieldLabel htmlFor="email">Email<Required>*</Required></FieldLabel>
            <FieldRow>
              <TextInput id="email" type="text" />
              <DomainBox>
                <DomainSelect aria-label="Mail domain" defaultValue="@gmail.com">
                  <option>@gmail.com</option>
                </DomainSelect>
                <Caret width="16" height="9" viewBox="0 0 16 9"><path d="M0 0h16L8 9z" fill="#6b6c6d" /></Caret>
              </DomainBox>
              <RoundMic type="button" aria-label="Dictate email"><FaMicrophoneSlash size={32} /></RoundMic>
            </FieldRow>
            <FieldLabel htmlFor="password">Password<Required>*</Required></FieldLabel>
            <FieldRow $last>
              <TextInput id="password" type="password" />
              <RoundMic type="button" aria-label="Dictate password"><FaMicrophoneSlash size={32} /></RoundMic>
            </FieldRow>
            <Actions>
              {["Forgot?", "Login", "Sign up"].map((label) => (
                <WaveButton key={label} type="button">
                  <Wave />
                  <WaveLabel>{label}</WaveLabel>
                </WaveButton>
              ))}
            </Actions>
            <GoogleButton type="button">
              <FcGoogle size={38} />
              Sign in with Google
            </GoogleButton>
            <FacebookButton type="button">Sign in with facebook</FacebookButton>
          </Card>
        </Page>
      </BrowserWindow>

      <Dock>
        {dockIcons.map(({ name, running, art }) => (
          <DockItem key={name} type="button" aria-label={name}>
            <Glyph>{art}</Glyph>
            {running && <RunningDot />}
          </DockItem>
        ))}
        <DockRule />
        {tray.map(({ name, art }) => (
          <DockItem key={name} type="button" aria-label={name}>
            <Glyph>{art}</Glyph>
          </DockItem>
        ))}
      </Dock>
    </Desktop>
  );
}
